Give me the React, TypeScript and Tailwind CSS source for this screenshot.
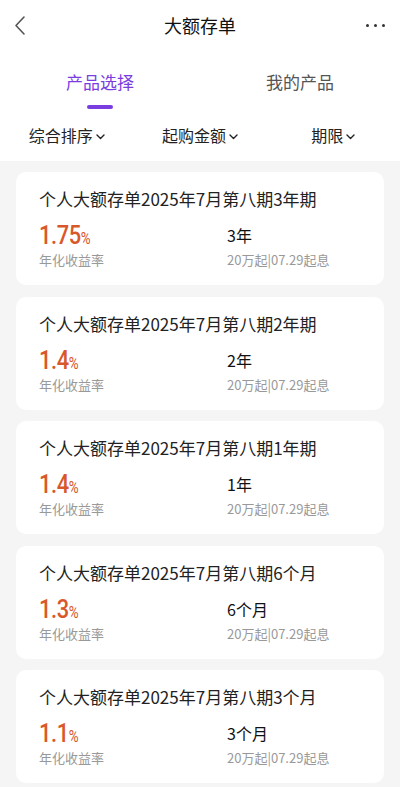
import React from 'react';

const products = [
  { name: '个人大额存单2025年7月第八期3年期', rate: '1.75', term: '3年' },
  { name: '个人大额存单2025年7月第八期2年期', rate: '1.4', term: '2年' },
  { name: '个人大额存单2025年7月第八期1年期', rate: '1.4', term: '1年' },
  { name: '个人大额存单2025年7月第八期6个月', rate: '1.3', term: '6个月' },
  { name: '个人大额存单2025年7月第八期3个月', rate: '1.1', term: '3个月' },
];

const Caret: React.FC = () => (
  <svg width="9" height="6" viewBox="0 0 9 6" className="ml-[3px] mt-[3px]" fill="none">
    <path d="M1 1l3.5 3.5L8 1" stroke="#222" strokeWidth="1.4" strokeLinecap="round" strokeLinejoin="round" />
  </svg>
);

const App: React.FC = () => {
  const filters = ['综合排序', '起购金额', '期限'];

  return (
    <div
      className="w-[400px] h-[787px] overflow-hidden bg-[#f5f5f5] text-[#222]"
      style={{ fontFamily: '"Noto Sans CJK SC", "Noto Sans", Roboto, sans-serif' }}
    >
      <div className="bg-white">
        {/* header */}
        <div className="relative h-[50px] flex items-center justify-center">
          <svg width="14" height="22" viewBox="0 0 14 22" className="absolute left-[13px] top-[15px]" fill="none">
            <path d="M11 2L3 10.5 11 19" stroke="#555" strokeWidth="1.6" strokeLinecap="round" strokeLinejoin="round" />
          </svg>
          <span className="text-[18px] leading-[24px] text-[#111]">大额存单</span>
          <div className="absolute right-[15px] top-[24px] flex gap-[5px]">
            <span className="w-[3px] h-[3px] rounded-full bg-[#333]" />
            <span className="w-[3px] h-[3px] rounded-full bg-[#333]" />
            <span className="w-[3px] h-[3px] rounded-full bg-[#333]" />
          </div>
        </div>

        {/* tabs */}
        <div className="flex pt-[20px]">
          <div className="flex-1 flex flex-col items-center">
            <span className="text-[17px] leading-[24px] text-[#7a3ee0]">产品选择</span>
            <span className="mt-[11px] w-[26px] h-[4px] rounded-full bg-[#7a3ee0]" />
          </div>
          <div className="flex-1 flex flex-col items-center">
            <span className="text-[17px] leading-[24px] text-[#555]">我的产品</span>
          </div>
        </div>

        {/* filters */}
        <div className="flex h-[52px] items-center">
          {filters.map((f) => (
            <div key={f} className="flex-1 flex items-center justify-center">
              <span className="text-[16px] leading-[22px] text-[#222]">{f}</span>
              <Caret />
            </div>
          ))}
        </div>
      </div>

      {/* list */}
      <div className="flex flex-col gap-[11.5px] px-[16px] pt-[11px]">
        {products.map((p) => (
          <div key={p.name} className="h-[113px] bg-white rounded-[10px] pl-[23px] pt-[15px]">
            <div className="text-[17px] leading-[24px] text-[#222]">{p.name}</div>
            <div className="flex mt-[9px]">
              <div className="w-[188px] flex flex-col">
                <div className="h-[30px] flex items-baseline">
                  <span
                    className="inline-block origin-left scale-x-[0.84] text-[26px] leading-[30px] font-medium text-[#d9582a] tracking-[-0.5px]"
                    style={{ fontFamily: 'Roboto, "Noto Sans", sans-serif' }}
                  >
                    {p.rate}
                    <span className="text-[16px] font-normal">%</span>
                  </span>
                </div>
                <div className="text-[13px] leading-[18px] text-[#999] mt-[1px]">年化收益率</div>
              </div>
              <div className="flex flex-col">
                <div className="text-[16px] leading-[30px] text-[#111]">{p.term}</div>
                <div className="text-[13px] leading-[18px] text-[#999] mt-[1px]">20万起|07.29起息</div>
              </div>
            </div>
          </div>
        ))}
      </div>
    </div>
  );
};

export default App;
